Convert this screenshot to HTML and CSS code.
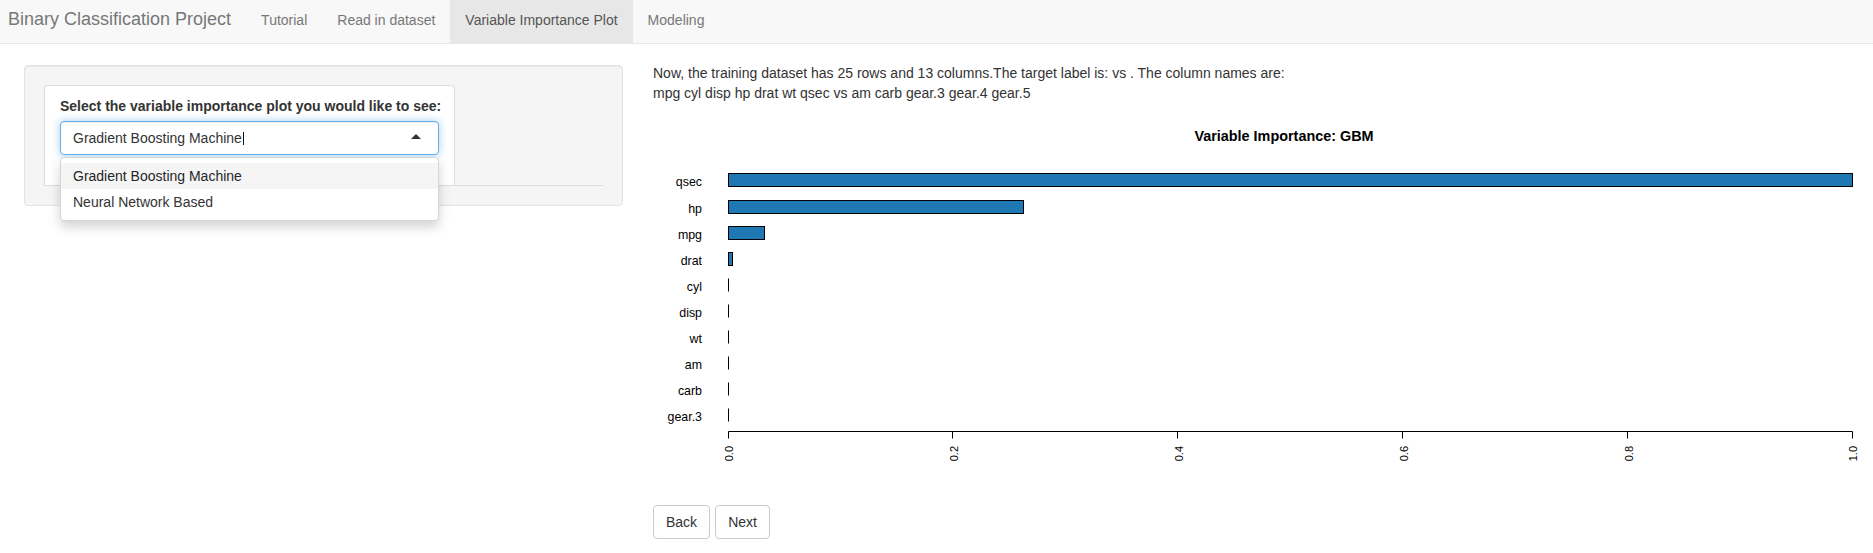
FILE: index.html
```html
<!DOCTYPE html>
<html lang="en">
<head>
<meta charset="utf-8">
<title>Binary Classification Project</title>
<link rel="stylesheet" href="styles.css">
</head>
<body>
<nav class="navbar">
  <span class="brand">Binary Classification Project</span>
  <ul class="nav">
    <li><a>Tutorial</a></li>
    <li><a>Read in dataset</a></li>
    <li class="active"><a>Variable Importance Plot</a></li>
    <li><a>Modeling</a></li>
  </ul>
</nav>
<main class="content">
  <aside class="sidebar">
    <div class="well">
      <div class="tab-area">
        <div class="card">
          <label class="control-label">Select the variable importance plot you would like to see:</label>
          <div class="selectize">
            <div class="select-input">Gradient Boosting Machine<span class="text-cursor"></span><span class="arrow"></span></div>
            <div class="dropdown">
              <div class="option active">Gradient Boosting Machine</div>
              <div class="option">Neural Network Based</div>
            </div>
          </div>
        </div>
      </div>
    </div>
  </aside>
  <section class="main-col">
    <p class="summary">Now, the training dataset has 25 rows and 13 columns.The target label is: vs . The column names are:<br>mpg cyl disp hp drat wt qsec vs am carb gear.3 gear.4 gear.5</p>
    <svg class="plot" width="1205" height="397" viewBox="0 3 1205 397">
      <text class="plot-title" x="631" y="41" text-anchor="middle">Variable Importance: GBM</text>
      <g class="bars">
        <rect x="75.5" y="73.5" width="1124" height="13"/>
        <rect x="75.5" y="100.5" width="295" height="13"/>
        <rect x="75.5" y="126.5" width="36" height="13"/>
        <rect x="75.5" y="152.5" width="4" height="13"/>
        <line x1="75.5" y1="178.5" x2="75.5" y2="191.5"/>
        <line x1="75.5" y1="204.5" x2="75.5" y2="217.5"/>
        <line x1="75.5" y1="230.5" x2="75.5" y2="243.5"/>
        <line x1="75.5" y1="256.5" x2="75.5" y2="269.5"/>
        <line x1="75.5" y1="282.5" x2="75.5" y2="295.5"/>
        <line x1="75.5" y1="308.5" x2="75.5" y2="321.5"/>
      </g>
      <g class="row-labels">
        <text x="49" y="86" text-anchor="end">qsec</text>
        <text x="49" y="113" text-anchor="end">hp</text>
        <text x="49" y="139" text-anchor="end">mpg</text>
        <text x="49" y="165" text-anchor="end">drat</text>
        <text x="49" y="191" text-anchor="end">cyl</text>
        <text x="49" y="217" text-anchor="end">disp</text>
        <text x="49" y="243" text-anchor="end">wt</text>
        <text x="49" y="269" text-anchor="end">am</text>
        <text x="49" y="295" text-anchor="end">carb</text>
        <text x="49" y="321" text-anchor="end">gear.3</text>
      </g>
      <g class="axis">
        <line x1="75.5" y1="331.5" x2="1199.5" y2="331.5"/>
        <line x1="75.5" y1="331.5" x2="75.5" y2="338.5"/>
        <line x1="299.5" y1="331.5" x2="299.5" y2="338.5"/>
        <line x1="524.5" y1="331.5" x2="524.5" y2="338.5"/>
        <line x1="749.5" y1="331.5" x2="749.5" y2="338.5"/>
        <line x1="974.5" y1="331.5" x2="974.5" y2="338.5"/>
        <line x1="1199.5" y1="331.5" x2="1199.5" y2="338.5"/>
      </g>
      <g class="tick-labels">
        <text transform="translate(80,346) rotate(-90)" text-anchor="end">0.0</text>
        <text transform="translate(304.5,346) rotate(-90)" text-anchor="end">0.2</text>
        <text transform="translate(529.5,346) rotate(-90)" text-anchor="end">0.4</text>
        <text transform="translate(754.5,346) rotate(-90)" text-anchor="end">0.6</text>
        <text transform="translate(979.5,346) rotate(-90)" text-anchor="end">0.8</text>
        <text transform="translate(1204,346) rotate(-90)" text-anchor="end">1.0</text>
      </g>
    </svg>
    <div class="buttons">
      <button class="btn">Back</button>
      <button class="btn">Next</button>
    </div>
  </section>
</main>
</body>
</html>
```
FILE: styles.css
```css
* { box-sizing: border-box; }

html, body {
  margin: 0;
  padding: 0;
  background: #fff;
}

body {
  font-family: "Liberation Sans", Arial, Helvetica, sans-serif;
  font-size: 14px;
  line-height: 20px;
  color: #333;
}

/* Navbar */
.navbar {
  display: flex;
  height: 44px;
  background: #f8f8f8;
  border-bottom: 1px solid #e7e7e7;
}

.brand {
  font-size: 18px;
  line-height: 20px;
  color: #777;
  padding: 9px 15px 0 8px;
  white-space: nowrap;
}

.nav {
  display: flex;
  list-style: none;
  margin: 0;
  padding: 0;
}

.nav li a {
  display: block;
  height: 43px;
  padding: 10px 15px 0;
  color: #777;
  white-space: nowrap;
}

.nav li.active a {
  background: #e7e7e7;
  color: #555;
}

/* Layout */
.content {
  display: flex;
  padding: 16px 15px 0 24px;
}

.sidebar {
  width: 599px;
  flex: none;
  margin-top: 5px;
}

.main-col {
  margin-left: 30px;
  flex: 1;
  min-width: 0;
}

/* Well */
.well {
  background: #f5f5f5;
  border: 1px solid #e3e3e3;
  border-radius: 4px;
  box-shadow: inset 0 1px 1px rgba(0, 0, 0, 0.05);
  padding: 19px;
}

.tab-area {
  border-bottom: 1px solid #ddd;
}

.card {
  width: 411px;
  background: #fff;
  border: 1px solid #ddd;
  border-bottom: none;
  border-radius: 4px 4px 0 0;
  padding: 10px 15px 30px 15px;
}

.control-label {
  display: block;
  font-weight: bold;
  margin-bottom: 5px;
  white-space: nowrap;
}

.selectize {
  position: relative;
}

.select-input {
  position: relative;
  height: 34px;
  padding: 6px 12px;
  border: 1px solid #66afe9;
  border-radius: 4px;
  background: #fff;
  color: #333;
  box-shadow: inset 0 1px 1px rgba(0, 0, 0, 0.075), 0 0 8px rgba(102, 175, 233, 0.6);
  white-space: nowrap;
}

.text-cursor {
  display: inline-block;
  width: 1px;
  height: 13px;
  background: #111;
  margin-left: 1px;
  vertical-align: -2px;
}

.arrow {
  position: absolute;
  right: 17px;
  top: 12px;
  width: 0;
  height: 0;
  border-style: solid;
  border-width: 0 5px 5px 5px;
  border-color: transparent transparent #333 transparent;
}

.dropdown {
  position: absolute;
  top: 100%;
  left: 0;
  right: 0;
  margin-top: 2px;
  background: #fff;
  border: 1px solid #d6d6d6;
  border-radius: 4px;
  box-shadow: 0 6px 12px rgba(0, 0, 0, 0.175);
  padding: 5px 0;
  z-index: 10;
}

.option {
  padding: 3px 12px;
  color: #333;
  white-space: nowrap;
}

.option.active {
  background: #f5f5f5;
  color: #262626;
}

/* Main column */
.summary {
  margin: 0;
  padding-top: 3px;
}

.plot {
  display: block;
}

.plot text {
  font-family: "Liberation Sans", Arial, Helvetica, sans-serif;
  fill: #000;
}

.plot-title {
  font-size: 14.4px;
  font-weight: bold;
}

.bars rect {
  fill: #1f77b4;
  stroke: #000;
  stroke-width: 1;
}

.bars line,
.axis line {
  stroke: #000;
  stroke-width: 1;
}

.row-labels text {
  font-size: 12.4px;
}

.tick-labels text {
  font-size: 11px;
}

.buttons {
  display: flex;
  gap: 5px;
  margin-top: 5px;
}

.btn {
  font-family: inherit;
  font-size: 14px;
  line-height: 20px;
  color: #333;
  background: #fff;
  border: 1px solid #ccc;
  border-radius: 4px;
  padding: 6px 12px;
  margin: 0;
}
```
